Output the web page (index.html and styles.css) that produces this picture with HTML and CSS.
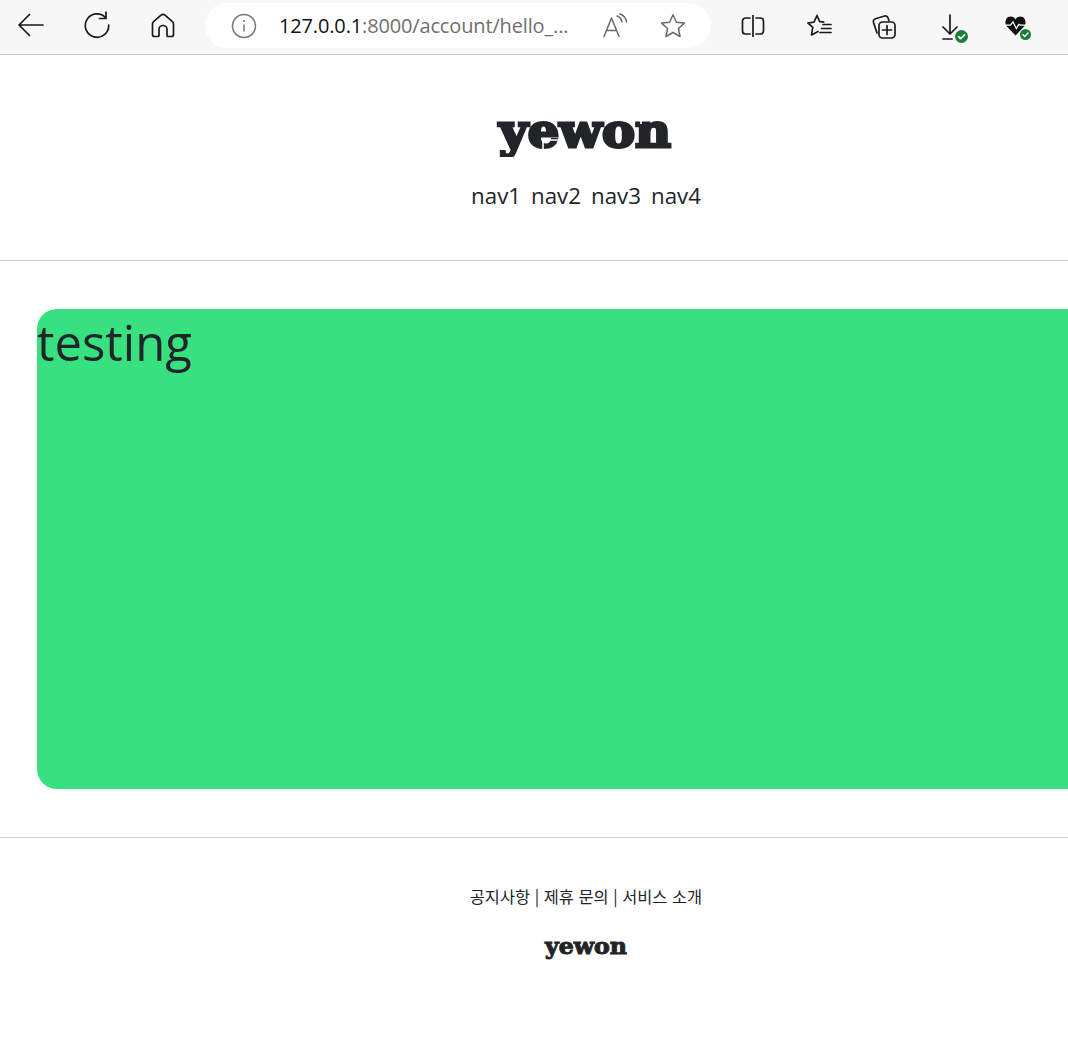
FILE: index.html
```html
<!DOCTYPE html>
<html lang="ko">
<head>
<meta charset="utf-8">
<title>yewon</title>
<link rel="stylesheet" href="styles.css">
</head>
<body>
<div class="toolbar">
  <svg class="ic back" width="28" height="24" viewBox="0 0 28 24"><path d="M26 12H2.500M12.500 1.500 2 12l10.500 10.500"/></svg>
  <svg class="ic reload" width="28" height="28" viewBox="0 0 28 28"><path d="M22.500 6.500A11.700 11.700 0 1 0 25.700 14M23 1v6.500h-6.500"/></svg>
  <svg class="ic home" width="24" height="26" viewBox="0 0 24 26"><path d="M10 2.200 2.600 8.600A3 3 0 0 0 1.500 11v10.500a2 2 0 0 0 2 2h3.500a1 1 0 0 0 1-1v-6a4 4 0 0 1 8 0v6a1 1 0 0 0 1 1h3.500a2 2 0 0 0 2-2V11a3 3 0 0 0-1.100-2.400L14 2.200a3 3 0 0 0-4 0Z"/></svg>
  <div class="omnibox">
    <svg class="info" width="26" height="26" viewBox="0 0 26 26"><circle cx="13" cy="13" r="11.500"/><path d="M13 11.500v7M13 7v2"/></svg>
    <div class="url"><span class="host">127.0.0.1</span>:8000/account/hello_...</div>
    <svg class="read" width="26" height="26" viewBox="0 0 26 26"><path d="M2 23.500 9.500 5l7.500 18.500M4.500 17.500h10M15 3c2.500.8 4.500 3 5 6M18 1c3.500 1.200 6 4.200 6.500 8"/></svg>
    <svg class="star" width="26" height="26" viewBox="0 0 26 26"><path d="m13 1.800 3.400 7.400 8 .9-6 5.400 1.700 8-7.100-4-7.100 4 1.700-8-6-5.400 8-.9Z"/></svg>
  </div>
  <svg class="ic split" width="24" height="22" viewBox="0 0 24 22"><path d="M9 3H4.500A3 3 0 0 0 1.500 6v10a3 3 0 0 0 3 3H9M15 3h4.500a3 3 0 0 1 3 3v10a3 3 0 0 1-3 3H15M12 0v22"/></svg>
  <svg class="ic favs" width="26" height="24" viewBox="0 0 26 24"><path d="m11 1.500 2.700 6.200 4 .4M2 9l6-.9L11 1.500M2 9l4.800 4.400-1.300 7.600 6.500-3.500M17 10.500h8M15.500 14.500h9.500M14 18.500h11"/></svg>
  <svg class="ic colls" width="26" height="26" viewBox="0 0 26 26"><path d="M6 20 2.500 9.500a3 3 0 0 1 2-3.800l9-2.700a3 3 0 0 1 3.600 2l.8 2.500"/><rect x="8" y="9" width="16" height="16" rx="3.500"/><path d="M16 12.500v9M11.500 17h9"/></svg>
  <div class="badged dl">
    <svg class="ic" width="18" height="26" viewBox="0 0 18 26"><path d="M8 1v19M1 13l7 7 7-7M1 25h9"/></svg>
    <svg class="check big" width="13" height="13" viewBox="0 0 14 14"><circle cx="7" cy="7" r="7"/><path d="m3.800 7.200 2.200 2.200 4.200-4.200"/></svg>
  </div>
  <div class="badged heart">
    <svg width="25" height="20" viewBox="0 0 26 24"><path class="hfill" d="M13 23.500 3 13C-1 9 1 .5 7 .5c3 0 5 1.500 6 3.500 1-2 3-3.500 6-3.500 6 0 8 8.500 4 12.500Z"/><path class="hline" d="M0 11h7l3-4 4 8 3-5 2 1h7"/></svg>
    <svg class="check small" width="11" height="11" viewBox="0 0 14 14"><circle cx="7" cy="7" r="7"/><path d="m3.800 7.200 2.200 2.200 4.200-4.200"/></svg>
  </div>
</div>
<div class="page">
  <header class="site-header">
    <svg class="logo" width="200" height="76" viewBox="0 0 200 76" role="img">
      <text class="logo-text" x="99" y="50" textLength="172" lengthAdjust="spacingAndGlyphs">yewon</text>
      <rect class="logo-mask" x="0" y="60" width="200" height="16"/>
      <path class="logo-cuts" d="M62 43h10M57 45v7M155 23v4"/>
    </svg>
    <nav class="nav"><a>nav1</a><a>nav2</a><a>nav3</a><a>nav4</a></nav>
  </header>
  <main class="main">
    <section class="panel">testing</section>
  </main>
  <footer class="site-footer">
    <div class="links">공지사항 | 제휴 문의 | 서비스 소개</div>
    <svg class="logo-small" width="100" height="34" viewBox="0 0 100 34" role="img">
      <text class="logo-text-small" x="50" y="24" textLength="82" lengthAdjust="spacingAndGlyphs">yewon</text>
    </svg>
  </footer>
</div>
</body>
</html>
```
FILE: styles.css
```css
* { box-sizing: border-box; }
html, body { margin: 0; padding: 0; overflow: hidden; height: 100%; background: #fff; }
body { width: 1068px; color: #212529; font-family: "Open Sans", "Noto Sans", "Noto Sans CJK KR", sans-serif; }

.toolbar {
  height: 55px;
  background: #f7f7f7;
  border-bottom: 1px solid #c6c6c6;
  display: flex;
  align-items: center;
  position: relative;
}
.toolbar svg { flex: none; }
.ic path, .ic rect { fill: none; stroke: #1a1a1a; stroke-width: 1.700; stroke-linecap: round; stroke-linejoin: round; }
.back { margin-left: 17px; margin-top: -5px; }
.reload { margin-left: 38px; margin-top: -5px; }
.home { margin-left: 40px; margin-top: -3px; }
.omnibox {
  width: 506px;
  height: 45px;
  margin-left: 30px;
  margin-top: -3px;
  background: #fff;
  border-radius: 23px;
  display: flex;
  align-items: center;
  flex: none;
}
.info { margin-left: 26px; }
.info circle, .info path { fill: none; stroke: #767676; stroke-width: 1.500; }
.url { margin-left: 22px; width: 323px; font-size: 20px; color: #6f6f6f; white-space: nowrap; letter-spacing: -.15px; font-family: "Open Sans", sans-serif; }
.host { color: #111; }
.read path, .star path { fill: none; stroke: #6a6a6a; stroke-width: 1.500; stroke-linejoin: round; stroke-linecap: round; }
.star { margin-left: 32px; }
.split { margin-left: 30px; margin-top: -3px; }
.favs { margin-left: 41px; margin-top: -3px; }
.colls { margin-left: 39px; margin-top: -2px; }
.badged { position: relative; flex: none; line-height: 0; }
.dl { margin-left: 45px; margin-top: 0; }
.heart { margin-left: 43px; margin-top: -3px; }
.check { position: absolute; }
.check circle { fill: #1a7f37; }
.check path { fill: none; stroke: #fff; stroke-width: 1.800; stroke-linecap: round; stroke-linejoin: round; }
.check.big { right: -8px; bottom: -3px; }
.check.small { right: -3px; bottom: -4px; }
.hfill { fill: #111; }
.hline { fill: none; stroke: #fff; stroke-width: 1.500; }

.page { width: 1172px; }
.site-header {
  height: 206px;
  border-bottom: 1px solid #ccc;
  display: flex;
  flex-direction: column;
  align-items: center;
  padding-top: 42px;
}
.logo { display: block; }
.logo-text {
  font-family: "DejaVu Serif", serif;
  font-weight: 700;
  font-size: 47px;
  text-anchor: middle;
  fill: #212529;
  stroke: #212529;
  stroke-width: 3;
}
.logo-mask { fill: #fff; }
.logo-cuts { fill: none; stroke: #fff; stroke-width: 1.600; }
.nav { display: flex; gap: 10px; margin-top: 7px; font-size: 22.300px; line-height: 32px; color: #212529; }

.main { padding: 48px 37px; }
.panel {
  height: 480px;
  background: #38e180;
  border-radius: 20px;
  font-size: 49px;
  line-height: 66px;
  color: #212529;
  font-family: "Open Sans", "Noto Sans", sans-serif;
}

.site-footer {
  border-top: 1px solid #ccc;
  display: flex;
  flex-direction: column;
  align-items: center;
  padding-top: 47px;
}
.links { font-size: 16.400px; line-height: 22px; font-family: "Noto Sans CJK KR", "Noto Sans", sans-serif; color: #212529; }
.logo-small { display: block; margin-top: 23px; }
.logo-text-small {
  font-family: "DejaVu Serif", serif;
  font-weight: 700;
  font-size: 22px;
  text-anchor: middle;
  fill: #212529;
  stroke: #212529;
  stroke-width: 1;
}
```
